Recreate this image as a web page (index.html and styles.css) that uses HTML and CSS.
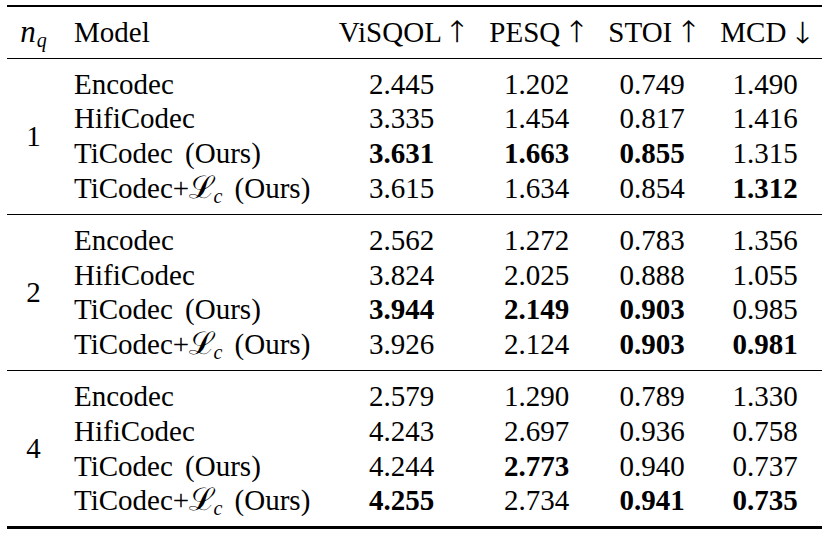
FILE: index.html
```html
<!DOCTYPE html>
<html lang="en">
<head>
<meta charset="utf-8">
<title>Table</title>
<link rel="stylesheet" href="styles.css">
</head>
<body>
<div class="page">
  <div class="caption"></div>
  <div class="rule heavy"></div>
  <div class="grid head">
    <div class="nq-head"><span class="mi">n</span><sub class="mi">q</sub></div>
    <div class="model">Model</div>
    <div class="num">ViSQOL <span class="arr">↑</span></div>
    <div class="num">PESQ <span class="arr">↑</span></div>
    <div class="num">STOI <span class="arr">↑</span></div>
    <div class="num">MCD <span class="arr">↓</span></div>
  </div>
  <div class="rule light"></div>

  <div class="grid group">
    <div class="nq">1</div>
    <div class="model">Encodec</div><div class="num">2.445</div><div class="num">1.202</div><div class="num">0.749</div><div class="num">1.490</div>
    <div class="model">HifiCodec</div><div class="num">3.335</div><div class="num">1.454</div><div class="num">0.817</div><div class="num">1.416</div>
    <div class="model">TiCodec (Ours)</div><div class="num b">3.631</div><div class="num b">1.663</div><div class="num b">0.855</div><div class="num">1.315</div>
    <div class="model">TiCodec+<span class="cal">ℒ</span><sub class="mi">c</sub> (Ours)</div><div class="num">3.615</div><div class="num">1.634</div><div class="num">0.854</div><div class="num b">1.312</div>
  </div>
  <div class="rule light"></div>

  <div class="grid group">
    <div class="nq">2</div>
    <div class="model">Encodec</div><div class="num">2.562</div><div class="num">1.272</div><div class="num">0.783</div><div class="num">1.356</div>
    <div class="model">HifiCodec</div><div class="num">3.824</div><div class="num">2.025</div><div class="num">0.888</div><div class="num">1.055</div>
    <div class="model">TiCodec (Ours)</div><div class="num b">3.944</div><div class="num b">2.149</div><div class="num b">0.903</div><div class="num">0.985</div>
    <div class="model">TiCodec+<span class="cal">ℒ</span><sub class="mi">c</sub> (Ours)</div><div class="num">3.926</div><div class="num">2.124</div><div class="num b">0.903</div><div class="num b">0.981</div>
  </div>
  <div class="rule light"></div>

  <div class="grid group">
    <div class="nq">4</div>
    <div class="model">Encodec</div><div class="num">2.579</div><div class="num">1.290</div><div class="num">0.789</div><div class="num">1.330</div>
    <div class="model">HifiCodec</div><div class="num">4.243</div><div class="num">2.697</div><div class="num">0.936</div><div class="num">0.758</div>
    <div class="model">TiCodec (Ours)</div><div class="num">4.244</div><div class="num b">2.773</div><div class="num">0.940</div><div class="num">0.737</div>
    <div class="model">TiCodec+<span class="cal">ℒ</span><sub class="mi">c</sub> (Ours)</div><div class="num b">4.255</div><div class="num">2.734</div><div class="num b">0.941</div><div class="num b">0.735</div>
  </div>
  <div class="rule heavy bottom"></div>
</div>
</body>
</html>
```

FILE: styles.css
```css
html, body {
  margin: 0;
  padding: 0;
  background: #ffffff;
}

body {
  width: 830px;
  height: 536px;
  overflow: hidden;
  font-family: "Liberation Serif", "Times New Roman", serif;
  font-size: 29px;
  color: #000000;
}

.page {
  padding-left: 7px;
  width: 815px;
}

.caption {
  height: 5px;
}

.rule {
  background: #000000;
  width: 815px;
}

.rule.heavy {
  height: 2.2px;
}

.rule.light {
  height: 1.3px;
}

.rule.bottom {
  height: 2.6px;
}

.grid {
  display: grid;
  grid-template-columns: 53px 266px 151px 119px 112px 114px;
  grid-auto-rows: 34.8px;
  line-height: 34.8px;
  padding: 7.7px 0 8px;
}

.nq-head,
.nq {
  text-align: center;
}

.nq {
  grid-row: 1 / span 4;
  align-self: center;
}

.model {
  padding-left: 14px;
  white-space: nowrap;
  word-spacing: 5px;
}

.num {
  text-align: center;
  white-space: nowrap;
  word-spacing: 2px;
}

.b {
  font-weight: bold;
}

.mi {
  font-style: italic;
}

sub.mi {
  font-size: 20px;
  line-height: 0;
  vertical-align: -5px;
}

.nq-head .mi:first-child {
  font-size: 31px;
}

.nq-head sub.mi {
  margin-left: 1px;
}

.cal {
  font-family: "FreeSerif", "DejaVu Serif", serif;
  font-size: 32px;
  margin-right: 1px;
}

.arr {
  font-family: "FreeSerif", "Liberation Serif", serif;
  font-size: 30px;
}
```
